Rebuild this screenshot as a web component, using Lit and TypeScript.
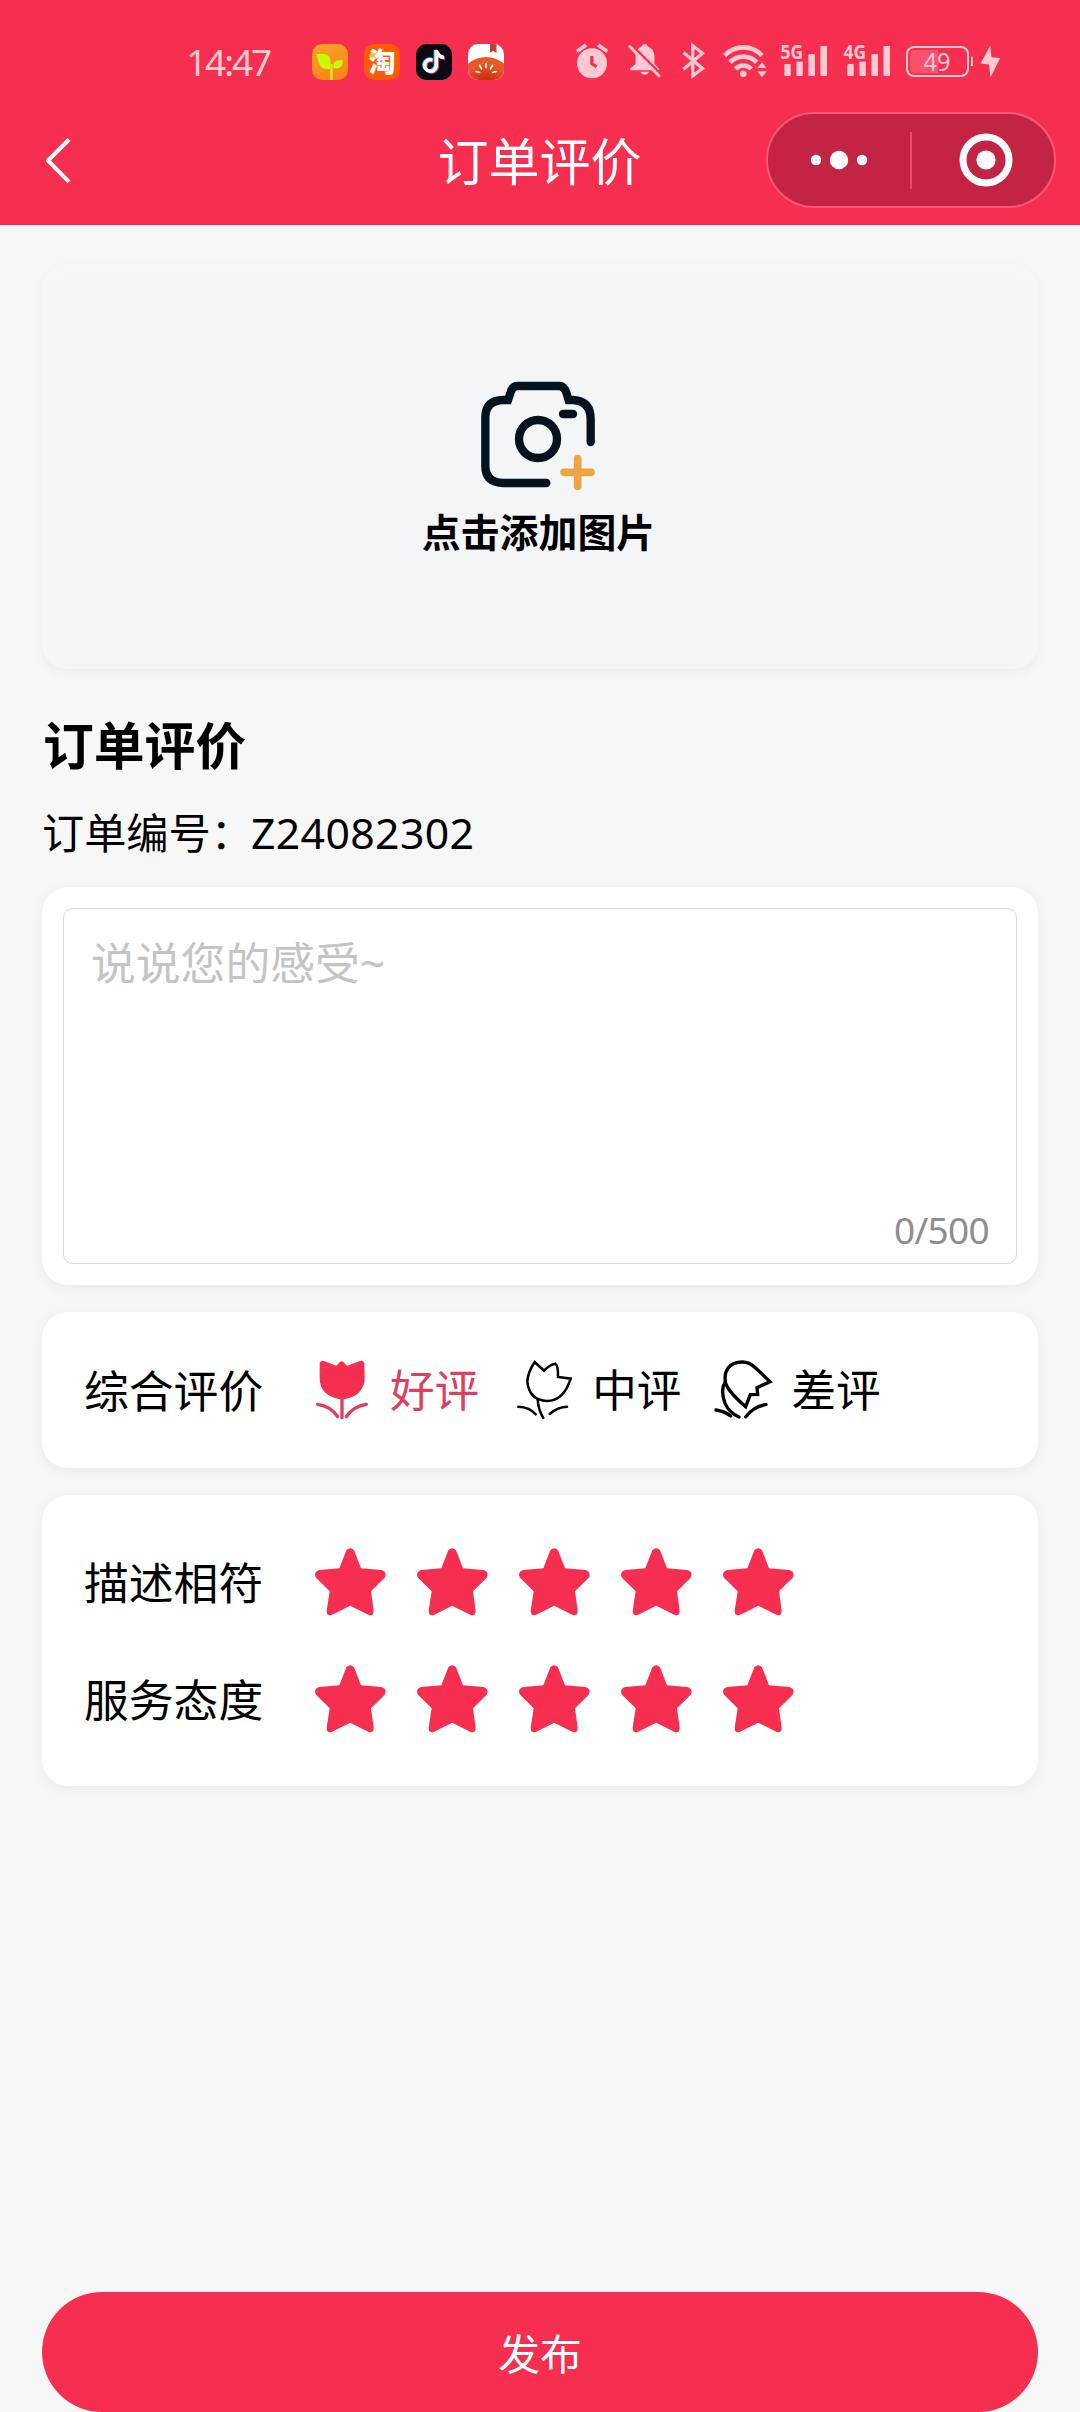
import { LitElement, html, css } from "lit";
import { customElement, property, state } from "lit/decorators.js";
import { classMap } from "lit/directives/class-map.js";

const FONT = css`"Noto Sans", "Noto Sans CJK SC", sans-serif`;

@customElement("status-bar")
export class StatusBar extends LitElement {
  static styles = css`
    :host { display: flex; align-items: center; box-sizing: border-box; height: 96px; padding: 28px 68px 0 186px; font-family: ${FONT}; color: #ffc9d2; }
    .time { width: 126px; font-size: 37px; line-height: 50px; letter-spacing: -2.1px; }
    .apps { display: flex; gap: 16px; flex: 1; }
    .app { display: block; width: 36px; height: 36px; overflow: visible; }
    .signals { display: flex; }
    .sig { display: block; height: 52px; fill: #ffc9d2; overflow: visible; }
    .line { fill: none; stroke: #ffc9d2; }
    .cut { fill: none; stroke: #f62f51; }
    .net { font-weight: 700; font-size: 20px; }
    .pct { font-size: 25px; }
    .glyph { font-family: "Noto Sans CJK SC", sans-serif; font-weight: 900; font-size: 27px; fill: #fff; }
  `;

  private network(label: string, width: number) {
    return html`<svg class="sig" width=${width} viewBox="774 36 ${width} 52">
      <text class="net" x="780.5" y="59" textLength="22.5" lengthAdjust="spacingAndGlyphs">${label}</text>
      <rect x="784.3" y="64" width="6.4" height="12" rx="1" />
      <rect x="796.4" y="61.5" width="6.4" height="14.5" rx="1" />
      <rect x="808.4" y="54" width="6.6" height="22" rx="1" />
      <rect x="820.4" y="46" width="6.6" height="30" rx="1" />
    </svg>`;
  }

  render() {
    return html`
      <span class="time">14:47</span>
      <div class="apps">
        <svg class="app" viewBox="0 0 36 36">
          <defs><linearGradient id="o" x1="0" y1="0" x2="0.3" y2="1"><stop offset="0" stop-color="#f7a52b" /><stop offset="1" stop-color="#fb8618" /></linearGradient></defs>
          <rect width="36" height="36" rx="10" fill="url(#o)" />
          <path d="M4.5 10H12Q18.5 10.5 18.5 17V25H13.500Q8 24 6.500 18Z" fill="#c6fa08" />
          <path d="M31 16.300L30 21Q28.500 24.500 24 24.500H21.500V21Q22 16.500 27 16.300Z" fill="#c6fa08" />
          <path d="M19.400 20V36" stroke="#d9ea2a" stroke-width="2.400" />
        </svg>
        <svg class="app" viewBox="0 0 36 36">
          <rect width="36" height="36" rx="10" fill="#ff5a08" />
          <text class="glyph" x="4.500" y="28">淘</text>
          <circle cx="8" cy="11" r="2.600" fill="#ffc21c" />
        </svg>
        <svg class="app" viewBox="0 0 36 36">
          <rect width="36" height="36" rx="10" fill="#0b0a14" />
          <g fill="none" stroke-width="3.400">
            <path d="M16.500 16A5.800 5.800 0 1 0 20.300 22V6.500Q22 13 28 13.500" stroke="#25d9de" transform="translate(-1 -0.600)" />
            <path d="M16.500 16A5.800 5.800 0 1 0 20.300 22V6.500Q22 13 28 13.500" stroke="#f33f69" transform="translate(1 0.800)" />
            <path d="M16.500 16A5.800 5.800 0 1 0 20.300 22V6.500Q22 13 28 13.500" stroke="#fff" />
          </g>
        </svg>
        <svg class="app" viewBox="0 0 36 36">
          <defs>
            <radialGradient id="t" cx="0.5" cy="0.6" r="0.45"><stop offset="0" stop-color="#c81d0c" /><stop offset="1" stop-color="#e65a28" /></radialGradient>
            <clipPath id="r"><rect width="36" height="36" rx="10" /></clipPath>
          </defs>
          <g clip-path="url(#r)">
            <rect width="36" height="36" fill="#fff" />
            <ellipse cx="18" cy="35" rx="25" ry="22" fill="url(#t)" />
            <path d="M22 0H28.500V9L25.200 6.800L22 9Z" fill="#b8452c" />
            <path d="M18 19.500V23.500M11.500 21.500L13.500 24.800M24.500 21.500L22.500 24.800M8 27.500L11.500 28.500M28 27.500L24.500 28.500" stroke="#fff" stroke-width="1.700" stroke-linecap="round" />
          </g>
        </svg>
      </div>
      <div class="signals">
        <svg class="sig" width="52" viewBox="566 36 52 52">
          <circle cx="592" cy="63.300" r="15" />
          <path class="line" stroke-width="3.800" d="M577 51.500L586 45M607.200 51.500L598.200 45" />
          <path class="cut" stroke-width="3.200" d="M591.800 56V63.500L596.500 67" />
        </svg>
        <svg class="sig" width="54" viewBox="618 36 54 52">
          <path d="M642 46.200Q642 44 644.700 44Q647.500 44 647.500 46.200Q654.500 49 654.500 56.500V64L659.300 69V70.300H630V68.500L635.500 64V55Q636 48.500 642 46.200Z" />
          <path d="M640.500 71.800H649Q648 74.600 644.700 74.600Q641.500 74.600 640.500 71.800Z" />
          <path class="cut" stroke-width="2.600" d="M632 45.500L662 75.500" />
          <path class="line" stroke-width="2.800" d="M629 45.800L660 76.800" />
        </svg>
        <svg class="sig" width="42" viewBox="672 36 42 52">
          <path class="line" stroke-width="3.200" d="M683.500 52.500L702.500 68.500L692.800 75.800V45.800L702.500 53.200L683.500 69.200" />
        </svg>
        <svg class="sig" width="60" viewBox="714 36 60 52">
          <g class="line" stroke-width="4.600">
            <path d="M724.700 55.500A25.500 25.500 0 0 1 762 55.500" />
            <path d="M730 62.300A18.500 18.500 0 0 1 756.600 62.300" />
            <path d="M735.300 69A11 11 0 0 1 751.300 69" />
          </g>
          <circle cx="743.300" cy="73.700" r="3.300" />
          <path d="M762 62.500L766.700 68H757.300ZM762 77.200L766.700 71.200H757.300Z" />
        </svg>
        ${this.network("5G", 63)}${this.network("4G", 61)}
        <svg class="sig" width="114" viewBox="898 36 114 52">
          <rect class="line" x="907" y="47" width="61" height="29" rx="7" stroke-width="2" />
          <path d="M915 50H938V73H915Q910 73 910 68V55Q910 50 915 50Z" fill-opacity="0.220" />
          <path d="M971 56.500H972.800V66H971Z" />
          <text class="pct" x="923.500" y="70.500" textLength="27" lengthAdjust="spacingAndGlyphs">49</text>
          <path d="M990.300 45.500L980.500 63.500L989 64.500L990.500 77.500L1000.200 58L991.500 57.300Z" />
        </svg>
      </div>
    `;
  }
}

@customElement("nav-bar")
export class NavBar extends LitElement {
  @property() heading = "";

  static styles = css`
    :host { display: grid; grid-template-columns: 1fr auto 1fr; align-items: center; box-sizing: border-box; height: 129px; padding: 0 24px 0 40px; font-family: ${FONT}; color: #fff; }
    .back { display: block; width: 36px; height: 56px; margin-top: -1px; }
    .title { font-size: 51px; line-height: 64px; font-weight: 400; padding-right: 17px; margin: 1px 0 0; }
    .capsule { justify-self: end; display: flex; align-items: center; box-sizing: border-box; width: 290px; height: 96px; border-radius: 48px; border: 2px solid #f95775; background: #c42443; margin-top: -1px; }
    .half { display: flex; flex: 1; justify-content: center; }
    .split { width: 2px; height: 57px; background: #ee4a67; }
    .dots { display: block; width: 60px; height: 20px; margin-right: 1px; }
    .target { display: block; width: 54px; height: 54px; margin-left: 5px; }
  `;

  render() {
    return html`
      <svg class="back" viewBox="40 132 36 56" fill="none" stroke="#fff" stroke-width="4">
        <path d="M69 139.500L48 160.500L69 181.800" stroke-linejoin="round" />
      </svg>
      <h1 class="title">${this.heading}</h1>
      <div class="capsule">
        <div class="half">
          <svg class="dots" viewBox="-30 -10 60 20" fill="#fff">
            <circle cx="-23" r="5.200" /><circle r="9.200" /><circle cx="23" r="5.200" />
          </svg>
        </div>
        <div class="split"></div>
        <div class="half">
          <svg class="target" viewBox="-27 -27 54 54">
            <circle r="23" fill="none" stroke="#fff" stroke-width="7" /><circle r="9.600" fill="#fff" />
          </svg>
        </div>
      </div>
    `;
  }
}

@customElement("star-rating")
export class StarRating extends LitElement {
  @property() label = "";
  @property({ type: Number }) value = 5;

  static styles = css`
    :host { display: flex; align-items: center; height: 117px; font-family: ${FONT}; }
    .label { width: 230px; font-size: 44.800px; line-height: 60px; padding-top: 3px; color: #000; }
    .stars { display: flex; gap: 30px; }
    .star { display: block; width: 72px; height: 70px; fill: #f62f51; }
    .off { fill: #ddd; }
  `;

  render() {
    return html`
      <span class="label">${this.label}</span>
      <div class="stars">
        ${[1, 2, 3, 4, 5].map(
          (n) => html`<svg class=${classMap({ star: true, off: n > this.value })} viewBox="884 200 216 210" @click=${() => (this.value = n)}>
            <path d="M981 210Q992.500 197 1004 210L1025 264L1086 269Q1105 275 1096 292L1055 333L1063 391Q1063 408 1048 404L992.500 376L937 404Q922 408 922 391L931 333L890 292Q881 275 900 269L960 264Z" />
          </svg>`
        )}
      </div>
    `;
  }
}

interface Mood {
  text: string;
  icon: unknown;
}

const MOODS: Mood[] = [
  {
    text: "好评",
    icon: html`<svg width="56" height="64" viewBox="882 174 168 192" fill="none" stroke="currentColor" stroke-width="10" stroke-linecap="round">
      <path fill="#f62f51" stroke="none" d="M899 190Q901 180 912 183L949 197L959 187Q965 181 971 187L981 197L1020 183Q1032 180 1033 190L1034 232Q1034 290 966 299Q898 290 899 232Z" />
      <path d="M966 296V353M893 313Q933 319 953 350M1039 313Q999 319 979 350" />
    </svg>`,
  },
  {
    text: "中评",
    icon: html`<svg width="60" height="64" viewBox="76 174 180 192" fill="none" stroke="currentColor" stroke-width="7.500" stroke-linecap="round">
      <path d="M135 186L163 212Q180 194 197 191Q206 197 205 231L243 236Q222 303 172 303Q118 300 113 245Q114 218 135 186Z" />
      <path d="M144 298Q146 330 161 354M86 320Q120 321 138 343M180 342Q205 320 232 320" />
    </svg>`,
  },
  {
    text: "差评",
    icon: html`<svg width="62" height="64" viewBox="666 174 186 192" fill="none" stroke="currentColor" stroke-width="10" stroke-linecap="round">
      <path d="M707 250C699 212 718 186 757 186Q778 186 796 203L840 245L801 263L803 283L781 284L767 320Q716 276 707 250Z" />
      <path d="M706 245Q690 270 705 310Q717 337 747 351M678 330Q704 334 722 348M767 351Q792 318 828 314" />
    </svg>`,
  },
];

@customElement("app-root")
export class AppRoot extends LitElement {
  @state() private mood = 0;

  static styles = css`
    :host { display: flex; flex-direction: column; width: 1080px; height: 2412px; background: #f7f7f7; font-family: ${FONT}; color: #000; overflow: hidden; }
    .top { background: #f62f51; }
    .main { flex: 1; display: flex; flex-direction: column; padding: 39px 42px 0; }
    .card { box-sizing: border-box; border-radius: 26px; background: #fff; box-shadow: 0 3px 16px rgba(0, 0, 0, 0.055); }
    .upload { display: flex; flex-direction: column; align-items: center; height: 405px; padding: 116px 3px 0 0; background: linear-gradient(180deg, #f6f7f7, rgba(244, 245, 247, 0) 30px), linear-gradient(90deg, #f6f7f7, #f3f5f7 40px, #f3f5f7 956px, #f6f7f7); box-shadow: 0 4px 14px rgba(0, 0, 0, 0.045); }
    .camera { display: block; width: 118.700px; height: 112px; }
    .hint { margin-top: 13px; font-size: 38.900px; line-height: 54px; font-weight: 700; }
    .section { margin: 46px 0 0 1px; font-size: 50.800px; line-height: 62px; font-weight: 700; }
    .order { margin: 28px 0 0; font-size: 42.200px; line-height: 56px; }
    .number { margin-left: -2px; font-size: 42.800px; letter-spacing: 0.350px; }
    .comment { margin-top: 26px; height: 398px; padding: 21px; }
    .field { box-sizing: border-box; height: 356px; display: flex; flex-direction: column; justify-content: space-between; padding: 23px 27px 8px; border: 1px solid #d8d8d8; border-radius: 10px; }
    .placeholder { font-size: 44.800px; line-height: 62px; color: #c4c4c4; }
    .count { align-self: flex-end; font-size: 37px; line-height: 50px; letter-spacing: -0.700px; color: #8e8e8e; }
    .overall { display: flex; align-items: center; margin-top: 27px; height: 156px; padding: 0 42px; }
    .label { width: 230px; padding-top: 1px; font-size: 44.800px; line-height: 60px; }
    .choice { display: flex; align-items: center; gap: 20px; margin-right: 36px; font-size: 44.600px; line-height: 60px; cursor: pointer; }
    .choice.second { gap: 17px; margin-right: 31px; }
    .choice.third { gap: 17px; }
    .choice.active { color: #dc3f60; }
    .ratings { margin-top: 27px; height: 291px; padding: 28px 42px; }
    .submit { margin-top: auto; height: 120px; padding: 4px 0 0; border: 0; border-radius: 60px; background: #f62f51; color: #fff; font: 400 41.800px/60px ${FONT}; }
  `;

  render() {
    return html`
      <header class="top">
        <status-bar></status-bar>
        <nav-bar heading="订单评价"></nav-bar>
      </header>
      <main class="main">
        <div class="card upload">
          <svg class="camera" viewBox="240 90 356 336" fill="none" stroke="#03141f" stroke-width="25" stroke-linecap="round">
            <path d="M442 399H310Q259 396 259 348V201Q260 151 312 150H327L334 130Q339 108 356 108H480Q496 108 502 128L509 150H523Q575 153 575 208V276" />
            <circle cx="417" cy="267" r="57" />
            <path d="M492 192H522" />
            <path d="M495 367H576M536 326V409" stroke="#eda445" stroke-width="23" />
          </svg>
          <span class="hint">点击添加图片</span>
        </div>
        <h2 class="section">订单评价</h2>
        <p class="order">订单编号：<span class="number">Z24082302</span></p>
        <div class="card comment">
          <div class="field">
            <span class="placeholder">说说您的感受~</span>
            <span class="count">0/500</span>
          </div>
        </div>
        <div class="card overall">
          <span class="label">综合评价</span>
          ${MOODS.map(
            (m, i) => html`<div class=${classMap({ choice: true, second: i === 1, third: i === 2, active: i === this.mood })} @click=${() => (this.mood = i)}>
              ${m.icon}<span>${m.text}</span>
            </div>`
          )}
        </div>
        <div class="card ratings">
          <star-rating label="描述相符"></star-rating>
          <star-rating label="服务态度"></star-rating>
        </div>
        <button class="submit">发布</button>
      </main>
    `;
  }
}
